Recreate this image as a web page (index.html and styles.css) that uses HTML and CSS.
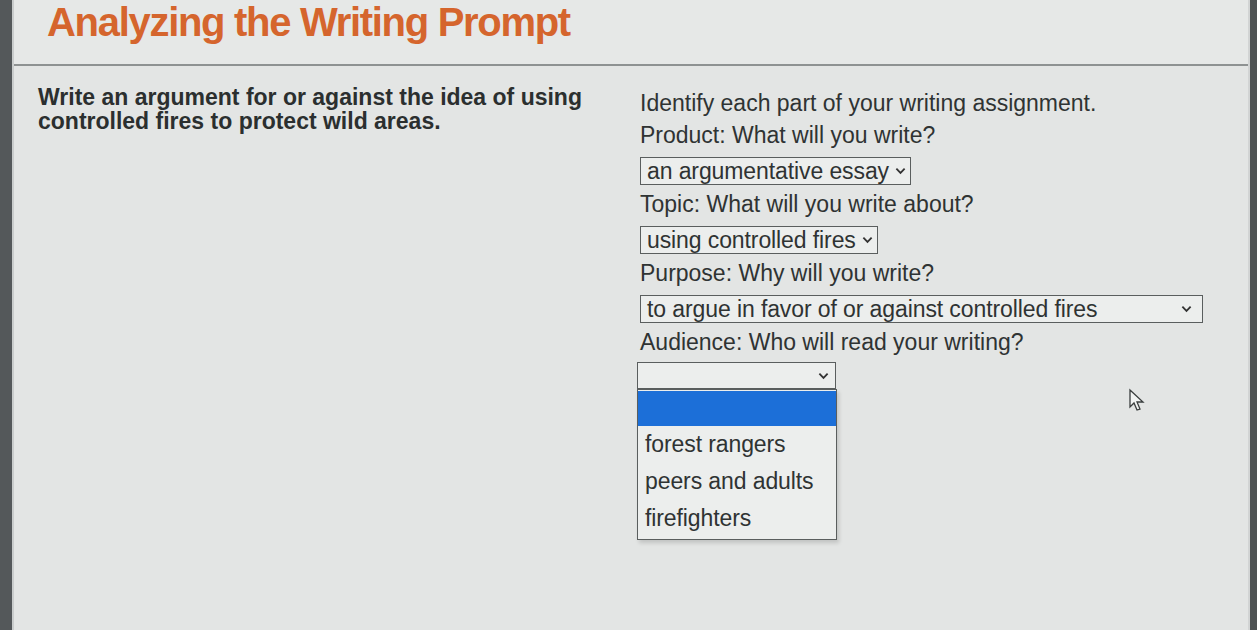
FILE: index.html
```html
<!DOCTYPE html>
<html>
<head>
<meta charset="utf-8">
<link rel="stylesheet" href="styles.css">
</head>
<body>
<div class="frame">
  <div class="edge-left"></div>
  <main class="page">
    <header class="header">
      <h1 class="title">Analyzing the Writing Prompt</h1>
    </header>
    <section class="content">
      <div class="prompt">
        <p>Write an argument for or against the idea of using controlled fires to protect wild areas.</p>
      </div>
      <div class="form">
        <div class="label">Identify each part of your writing assignment.</div>
        <div class="label">Product: What will you write?</div>
        <div class="select sel-product"><span>an argumentative essay</span><svg class="chev" viewBox="0 0 12 8"><path d="M1.5 1.5 L6 6 L10.5 1.5" /></svg></div>
        <div class="label">Topic: What will you write about?</div>
        <div class="select sel-topic"><span>using controlled fires</span><svg class="chev" viewBox="0 0 12 8"><path d="M1.5 1.5 L6 6 L10.5 1.5" /></svg></div>
        <div class="label">Purpose: Why will you write?</div>
        <div class="select sel-purpose"><span>to argue in favor of or against controlled fires</span><svg class="chev" viewBox="0 0 12 8"><path d="M1.5 1.5 L6 6 L10.5 1.5" /></svg></div>
        <div class="label">Audience: Who will read your writing?</div>
        <div class="dropdown">
          <div class="select sel-audience"><span></span><svg class="chev" viewBox="0 0 12 8"><path d="M1.5 1.5 L6 6 L10.5 1.5" /></svg></div>
          <ul class="options">
            <li class="opt selected"></li>
            <li class="opt">forest rangers</li>
            <li class="opt">peers and adults</li>
            <li class="opt">firefighters</li>
          </ul>
        </div>
      </div>
    </section>
    <svg class="cursor" viewBox="0 0 20 26"><path d="M2 2 L2 19 L6 15 L9 22 L12 21 L9 14 L15 14 Z" /></svg>
  </main>
  <div class="edge-right"></div>
</div>
</body>
</html>
```
FILE: styles.css
```css
html, body {
  margin: 0;
  padding: 0;
  height: 100%;
}
body {
  background: #e2e4e3;
  font-family: "Liberation Sans", Arial, sans-serif;
  color: #2f3333;
  overflow: hidden;
}
.frame {
  display: flex;
  height: 630px;
}
.edge-left {
  width: 12px;
  background: #54585a;
  border-right: 2px solid #c9cccc;
}
.edge-right {
  width: 7px;
  background: #4f5354;
  border-left: 2px solid #d2d4d4;
}
.page {
  flex: 1;
  position: relative;
  background: #e3e5e4;
}
.header {
  height: 64px;
  border-bottom: 2px solid #8e9292;
  padding-left: 33px;
  background: #e6e8e7;
}
.title {
  margin: 0;
  padding-top: 0;
  font-size: 40px;
  line-height: 44px;
  font-weight: bold;
  color: #d5652d;
  letter-spacing: -1.3px;
}
.content {
  display: flex;
  padding-top: 19px;
}
.prompt {
  width: 602px;
  padding-left: 24px;
}
.prompt p {
  margin: 0;
  width: 570px;
  font-size: 23px;
  line-height: 24px;
  font-weight: bold;
  color: #2b2f2f;
}
.form {
  display: flex;
  flex-direction: column;
  align-items: flex-start;
  padding-top: 2px;
}
.label {
  font-size: 23px;
  line-height: 32px;
  height: 32px;
  white-space: nowrap;
}
.select {
  box-sizing: border-box;
  height: 28px;
  margin: 6px 0 3px;
  border: 1px solid #5a5e5e;
  background: #eceeed;
  display: flex;
  align-items: center;
  justify-content: space-between;
  padding: 0 4px 0 6px;
  font-size: 23px;
  letter-spacing: -0.1px;
  white-space: nowrap;
}
.chev {
  flex: none;
  width: 11px;
  height: 8px;
  fill: none;
  stroke: #333;
  stroke-width: 2;
}
.sel-product { width: 271px; }
.sel-topic { width: 238px; }
.sel-purpose { width: 563px; padding-right: 10px; }
.dropdown {
  margin-left: -3px;
  display: flex;
  flex-direction: column;
}
.sel-audience {
  width: 199px;
  margin: 4px 0 0;
  height: 27px;
  padding-right: 6px;
  justify-content: flex-end;
}
.options {
  list-style: none;
  margin: 0;
  padding: 1px 0 2px;
  width: 200px;
  box-sizing: border-box;
  border: 1px solid #5a5e5e;
  background: #eceeed;
  box-shadow: 2px 3px 4px rgba(0,0,0,0.15);
}
.opt {
  height: 37px;
  line-height: 37px;
  padding-left: 7px;
  font-size: 23px;
  letter-spacing: -0.1px;
}
.opt.selected {
  height: 35px;
  background: #1c6fd8;
}
.cursor {
  position: absolute;
  left: 1114px;
  top: 388px;
  width: 20px;
  height: 26px;
  fill: #f2f4f3;
  stroke: #3a3e3e;
  stroke-width: 1.3;
}
```
